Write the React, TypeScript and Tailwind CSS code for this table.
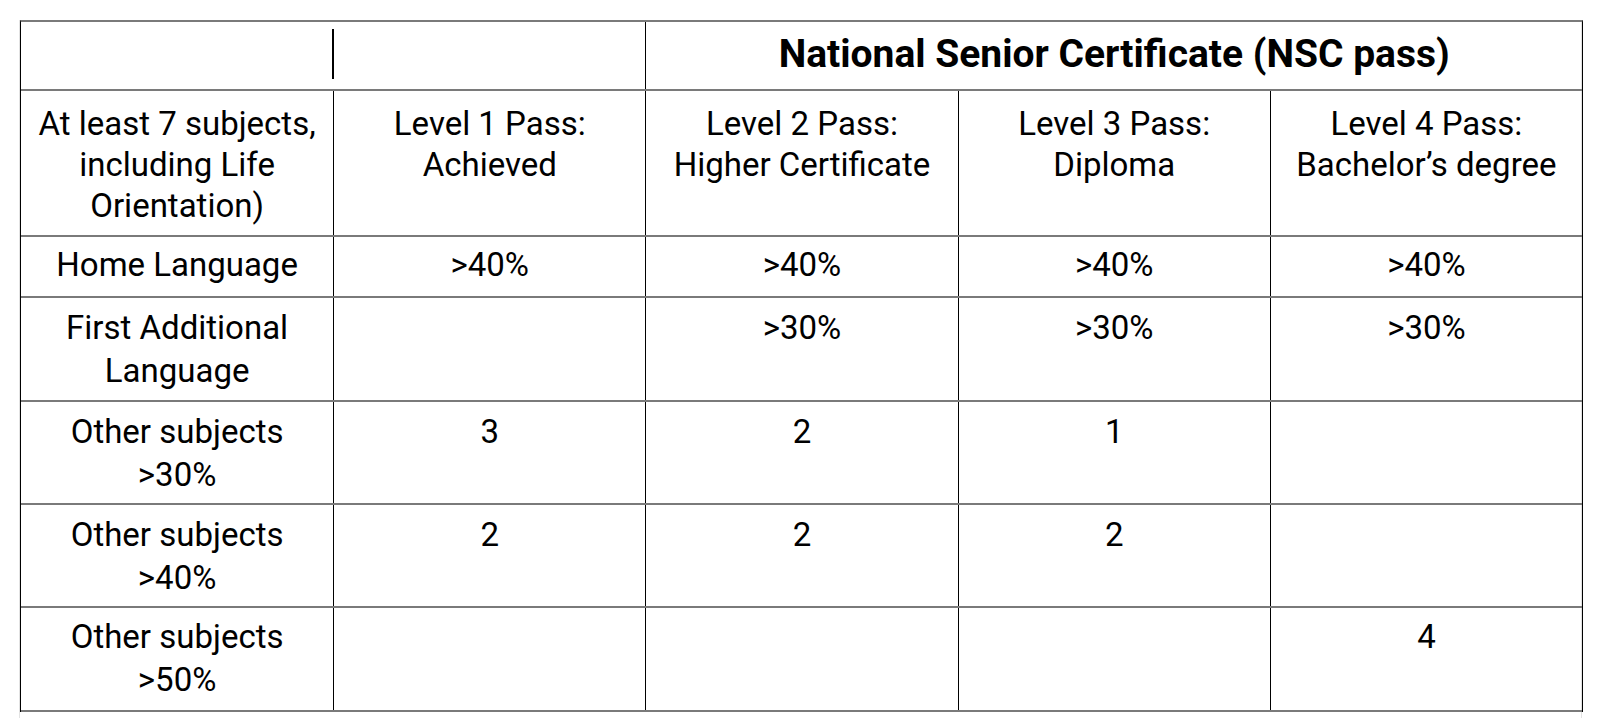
const LEVELS = [
  ['Level 1 Pass:', 'Achieved'],
  ['Level 2 Pass:', 'Higher Certificate'],
  ['Level 3 Pass:', 'Diploma'],
  ['Level 4 Pass:', 'Bachelor’s degree']
]

type Row = { label: string[]; values: string[]; height: string; pad: string }

const ROWS: Row[] = [
  { label: ['Home Language'], values: ['>40%', '>40%', '>40%', '>40%'], height: 'h-[61px]', pad: 'pt-[7px]' },
  { label: ['First Additional', 'Language'], values: ['', '>30%', '>30%', '>30%'], height: 'h-[104px]', pad: 'pt-[9px]' },
  { label: ['Other subjects', '>30%'], values: ['3', '2', '1', ''], height: 'h-[103px]', pad: 'pt-[9px]' },
  { label: ['Other subjects', '>40%'], values: ['2', '2', '2', ''], height: 'h-[103px]', pad: 'pt-[9px]' },
  { label: ['Other subjects', '>50%'], values: ['', '', '', '4'], height: 'h-[104px]', pad: 'pt-[8px]' }
]

function Lines({ lines }: { lines: string[] }) {
  return (
    <>
      {lines.map((l, i) => (
        <div key={i}>{l}</div>
      ))}
    </>
  )
}

export default function App() {
  return (
    <div
      className="min-h-[718px] w-[1600px] bg-white pl-[19px] pt-[20px] text-black"
      style={{ fontFamily: 'Roboto, "Liberation Sans", sans-serif' }}
    >
      <div className="h-[698px] w-[1563px] border-x border-[#e2e2e2]">
        <div className="w-[1563px] border-x border-t-2 border-x-black border-t-[#7a7a7a] text-[33px] leading-[42.5px]">
          {/* header row */}
          <div className="grid h-[69px] grid-cols-5 border-b-2 border-[#7a7a7a]">
            <div className="relative col-span-2">
              <span className="absolute left-[311px] top-[7px] h-[50px] w-[2px] bg-black" />
            </div>
            <div className="col-span-3 flex items-center justify-center border-l border-black pb-[2px] text-[39px] font-bold">
              National Senior Certificate (NSC pass)
            </div>
          </div>

          {/* level row */}
          <div className="grid h-[146px] grid-cols-5 border-b-2 border-[#7a7a7a] text-center">
            <div className="pt-[12px] leading-[41px]">
              <Lines lines={['At least 7 subjects,', 'including Life', 'Orientation)']} />
            </div>
            {LEVELS.map((lv, i) => (
              <div key={i} className="border-l border-black pt-[12px] leading-[41px]">
                <Lines lines={lv} />
              </div>
            ))}
          </div>

          {ROWS.map((row, r) => (
            <div key={r} className={`grid grid-cols-5 border-b-2 border-[#7a7a7a] text-center ${row.height}`}>
              <div className={row.pad}>
                <Lines lines={row.label} />
              </div>
              {row.values.map((v, i) => (
                <div key={i} className={`border-l border-black ${row.pad}`}>
                  {v}
                </div>
              ))}
            </div>
          ))}
        </div>
      </div>
    </div>
  )
}
